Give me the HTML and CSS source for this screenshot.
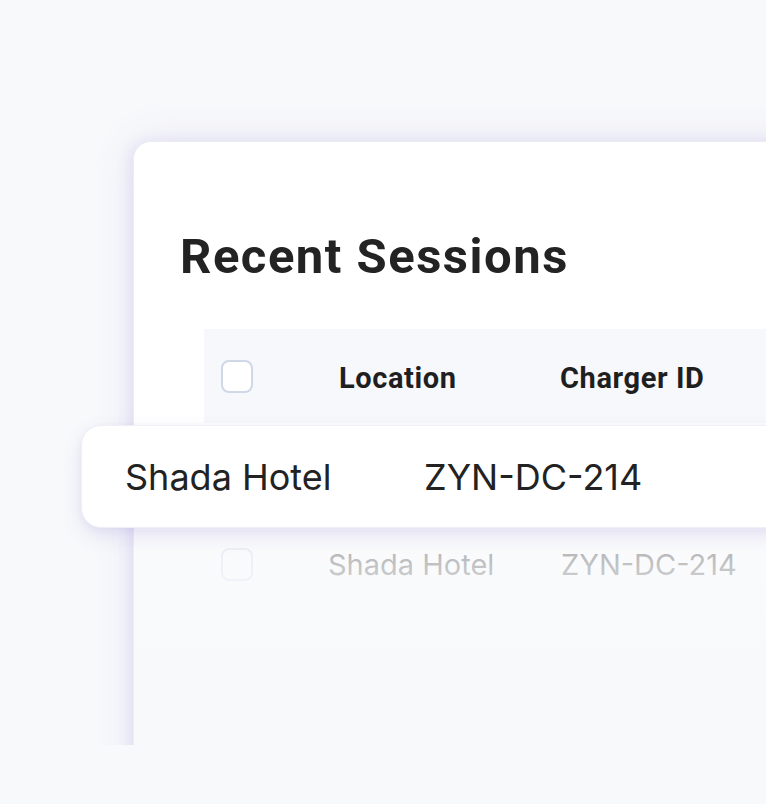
FILE: index.html
```html
<!DOCTYPE html>
<html>
<head>
<meta charset="utf-8">
<link rel="stylesheet" href="styles.css">
</head>
<body>
<div class="stage">
  <div class="card">
    <h1 class="title">Recent Sessions</h1>
    <div class="table">
      <div class="thead">
        <span class="check"></span>
        <span class="th th-loc">Location</span>
        <span class="th">Charger ID</span>
      </div>
      <div class="trow slot"></div>
      <div class="trow">
        <span class="check"></span>
        <span class="td td-loc">Shada Hotel</span>
        <span class="td">ZYN-DC-214</span>
      </div>
    </div>
    <div class="fade"></div>
    <div class="float-row">
      <span class="fr-loc">Shada Hotel</span>
      <span class="fr-id">ZYN-DC-214</span>
    </div>
  </div>
</div>
</body>
</html>
```
FILE: styles.css
```css
html, body {
  margin: 0;
  padding: 0;
}
body {
  background: #f8f9fb;
  width: 766px;
  height: 804px;
  overflow: hidden;
}
.stage {
  height: 745px;
  overflow: hidden;
  padding: 141px 0 0 133px;
  box-sizing: border-box;
}
.card {
  position: relative;
  width: 680px;
  height: 720px;
  background: #ffffff;
  border-top: 1px solid #ececf2;
  border-left: 1px solid #ececf2;
  border-radius: 18px 0 0 0;
  box-shadow: 0 0 44px rgba(104, 86, 196, 0.12), -4px 0 14px rgba(104, 86, 196, 0.09);
  box-sizing: border-box;
  padding-top: 91px;
}
.title {
  margin: 0 0 48px 46px;
  font-family: Roboto, "Liberation Sans", sans-serif;
  font-weight: 700;
  font-size: 49px;
  line-height: 48px;
  color: #232323;
  letter-spacing: 1.5px;
}
.table {
  margin-left: 70px;
}
.thead {
  display: flex;
  align-items: center;
  height: 94px;
  background: #f7f8fb;
  padding-left: 17px;
}
.check {
  width: 28px;
  height: 29px;
  border: 2px solid #cfd8e6;
  border-radius: 8px;
  background: #fff;
  flex: none;
}
.th {
  font-family: Roboto, "Liberation Sans", sans-serif;
  font-weight: 700;
  font-size: 29px;
  letter-spacing: 0.6px;
  color: #1f1f1f;
  padding-top: 4px;
}
.th-loc {
  margin-left: 86px;
  width: 221px;
}
.trow {
  display: flex;
  align-items: center;
  height: 94px;
  padding-left: 17px;
}
.td {
  font-family: Inter, "Noto Sans", sans-serif;
  font-weight: 400;
  font-size: 29px;
  color: #222;
}
.td-loc {
  margin-left: 75px;
  width: 233px;
}
.fade {
  position: absolute;
  left: 0;
  right: 0;
  top: 388px;
  bottom: 0;
  background: linear-gradient(to bottom, rgba(248, 249, 251, 0.62) 0px, rgba(248, 249, 251, 0.8) 50px, #f8f9fb 120px);
}
.float-row {
  position: absolute;
  left: -53px;
  top: 283px;
  right: -40px;
  height: 103px;
  display: flex;
  align-items: center;
  padding-left: 43px;
  background: #ffffff;
  border-radius: 20px;
  border: 1px solid #efeff5;
  box-sizing: border-box;
  box-shadow: 0 8px 20px rgba(104, 86, 196, 0.14), 0 2px 6px rgba(104, 86, 196, 0.06);
  font-family: Inter, "Noto Sans", sans-serif;
  font-weight: 400;
  font-size: 36px;
  color: #222;
}
.fr-loc {
  width: 299px;
}
```
